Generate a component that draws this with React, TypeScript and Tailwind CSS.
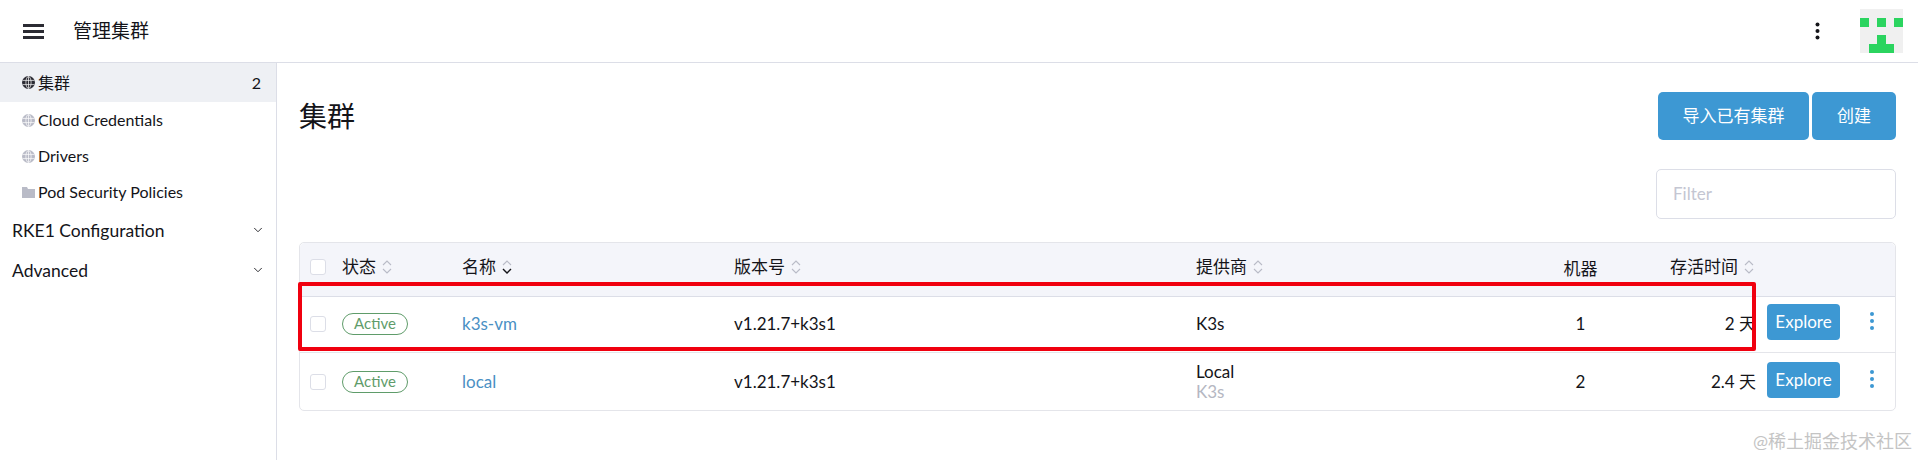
import React from "react";
import { ChevronDown } from "lucide-react";

const cjk = "font-['Lato','Noto_Sans_CJK_SC',sans-serif]";

const GlobeIcon = ({ color }: { color: string }) => (
    <svg width="13" height="13" viewBox="0 0 13 13" className="shrink-0">
        <circle cx="6.5" cy="6.5" r="6.5" fill={color} />
        <g fill="none" stroke="white" strokeWidth="0.7">
            <ellipse cx="6.5" cy="6.5" rx="2.6" ry="6" />
            <path d="M0.5 4.4H12.5M0.5 8.6H12.5M6.5 0.5V12.5" />
        </g>
    </svg>
);

const FolderIcon = () => (
    <svg width="13" height="11" viewBox="0 0 13 11" className="shrink-0">
        <path d="M0 0H5L6 2H13V11H0Z" fill="#b9bbc7" />
    </svg>
);

const SortIcon = ({ active }: { active?: boolean }) => (
    <svg width="10" height="14" viewBox="0 0 10 14" className="ml-[6px] shrink-0" fill="none">
        <path d="M1 5L5 1L9 5" stroke="#b9bbc7" strokeWidth="1.1" />
        <path d="M1 9L5 13L9 9" stroke={active ? "#141419" : "#b9bbc7"} strokeWidth={active ? 1.4 : 1.1} />
    </svg>
);

const Checkbox = () => <div className="h-4 w-4 rounded-[3px] border border-[#dcdee7] bg-white" />;

const Avatar = () => (
    <svg width="43" height="44" viewBox="0 0 43 44">
        <rect width="43" height="44" fill="#f0f0f0" />
        <g fill="#2bd45f">
            <rect x="0" y="9" width="9" height="9" />
            <rect x="17" y="9" width="9" height="9" />
            <rect x="34" y="9" width="9" height="9" />
            <rect x="17" y="26" width="9" height="9" />
            <rect x="9" y="35" width="25" height="9" />
        </g>
    </svg>
);

const ExploreRow = () => (
    <div className="flex items-center pl-[11px]">
        <button className="mt-[-3px] h-9 w-[73px] rounded-[4px] bg-[#3d98d3] text-[17px] text-white">Explore</button>
        <svg width="6" height="20" viewBox="0 0 6 20" className="ml-[29px] mt-[-6px]" fill="#3d98d3">
            <circle cx="3" cy="3" r="2" />
            <circle cx="3" cy="10" r="2" />
            <circle cx="3" cy="17" r="2" />
        </svg>
    </div>
);

const Badge = () => (
    <span className="flex h-[22px] w-[66px] items-center justify-center rounded-full border border-[#5f9c6a] text-[15px] text-[#5f9c6a]">
        Active
    </span>
);

const App = () => {
    return (
        <div className={`relative flex h-[460px] w-full flex-col overflow-hidden bg-white text-[#141419] ${cjk}`}>
            <header className="flex h-[63px] shrink-0 items-center border-b border-[#dcdee7] pl-[23px] pr-[15px]">
                <div className="flex w-[21px] flex-col gap-[3px]">
                    <div className="h-[3px] bg-[#2b2b33]" />
                    <div className="h-[3px] bg-[#2b2b33]" />
                    <div className="h-[3px] bg-[#2b2b33]" />
                </div>
                <div className="ml-[29px] text-[19px]">管理集群</div>
                <svg width="5" height="18" viewBox="0 0 5 18" className="ml-auto mr-10" fill="#141419">
                    <circle cx="2.5" cy="2.5" r="2" />
                    <circle cx="2.5" cy="9" r="2" />
                    <circle cx="2.5" cy="15.5" r="2" />
                </svg>
                <Avatar />
            </header>

            <div className="flex min-h-0 flex-1">
                <aside className="w-[277px] shrink-0 border-r border-[#dcdee7] text-[16px]">
                    <div className="flex h-[39px] items-center gap-[3px] bg-[#eef0f4] pl-[22px] pr-[15px]">
                        <GlobeIcon color="#2b2b33" />
                        <span>集群</span>
                        <span className="ml-auto">2</span>
                    </div>
                    <div className="flex h-9 items-center gap-[3px] pl-[22px]">
                        <GlobeIcon color="#b9bbc7" />
                        <span>Cloud Credentials</span>
                    </div>
                    <div className="flex h-9 items-center gap-[3px] pl-[22px]">
                        <GlobeIcon color="#b9bbc7" />
                        <span>Drivers</span>
                    </div>
                    <div className="flex h-9 items-center gap-[3px] pl-[22px]">
                        <FolderIcon />
                        <span>Pod Security Policies</span>
                    </div>
                    <div className="mt-px flex h-[40px] items-center justify-between pl-3 pr-[11px] text-[17.5px]">
                        <span>RKE1 Configuration</span>
                        <ChevronDown size={14} strokeWidth={1.5} className="mt-[-3px]" />
                    </div>
                    <div className="flex h-[40px] items-center justify-between pl-3 pr-[11px] text-[17.5px]">
                        <span>Advanced</span>
                        <ChevronDown size={14} strokeWidth={1.5} className="mt-[-3px]" />
                    </div>
                </aside>

                <main className="min-w-0 flex-1 pl-[22px] pr-[22px] pt-[29px]">
                    <div className="flex h-12 items-center justify-between">
                        <h1 className="text-[28px]">集群</h1>
                        <div className="flex gap-[3px]">
                            <button className="h-12 w-[151px] rounded-[5px] bg-[#3d98d3] text-[17px] text-white">导入已有集群</button>
                            <button className="h-12 w-[84px] rounded-[5px] bg-[#3d98d3] text-[17px] text-white">创建</button>
                        </div>
                    </div>

                    <div className="mt-[29px] flex justify-end">
                        <input
                            className="h-[50px] w-[240px] rounded-[5px] border border-[#dcdee7] px-4 pb-[2px] text-[17px] placeholder:text-[#c4c6d2] focus:outline-none"
                            placeholder="Filter"
                        />
                    </div>

                    <div className="relative mt-[23px] rounded-[5px] border border-[#e4e5ea] text-[17px]">
                        <div className="grid h-[54px] grid-cols-[42px_120px_272px_462px_335px_99px_126px_1fr] items-center rounded-t-[5px] border-b border-[#dcdee7] bg-[#f4f5fa] pb-[5px]">
                            <div className="pl-[10px]"><Checkbox /></div>
                            <div className="flex items-center">状态<SortIcon /></div>
                            <div className="flex items-center">名称<SortIcon active /></div>
                            <div className="flex items-center">版本号<SortIcon /></div>
                            <div className="flex items-center">提供商<SortIcon /></div>
                            <div className="pt-[3px] text-center">机器</div>
                            <div className="flex items-center justify-end pr-[2px]">存活时间<SortIcon /></div>
                            <div />
                        </div>

                        <div className="grid h-14 grid-cols-[42px_120px_272px_462px_335px_99px_126px_1fr] items-center border-b border-[#e4e5ea] pb-[2px]">
                            <div className="pl-[10px]"><Checkbox /></div>
                            <div><Badge /></div>
                            <div className="text-[#4a90c4]">k3s-vm</div>
                            <div>v1.21.7+k3s1</div>
                            <div>K3s</div>
                            <div className="text-center">1</div>
                            <div className="text-right">2 天</div>
                            <ExploreRow />
                        </div>

                        <div className="grid h-[57px] grid-cols-[42px_120px_272px_462px_335px_99px_126px_1fr] items-center">
                            <div className="pl-[10px]"><Checkbox /></div>
                            <div><Badge /></div>
                            <div className="text-[#4a90c4]">local</div>
                            <div>v1.21.7+k3s1</div>
                            <div className="leading-[20px]">
                                <div>Local</div>
                                <div className="text-[#b5b7c2]">K3s</div>
                            </div>
                            <div className="text-center">2</div>
                            <div className="text-right">2.4 天</div>
                            <ExploreRow />
                        </div>

                        {/* annotation drawn over the screenshot */}
                        <div className="absolute left-[-2px] top-[39px] h-[69px] w-[1458px] rounded-[2px] border-[4px] border-[#f0000f]" />
                    </div>
                </main>
            </div>

            <div className="absolute bottom-[5px] right-[6px] text-[18px] text-[#c4c4c4]">@稀土掘金技术社区</div>
        </div>
    );
};

export default App;
